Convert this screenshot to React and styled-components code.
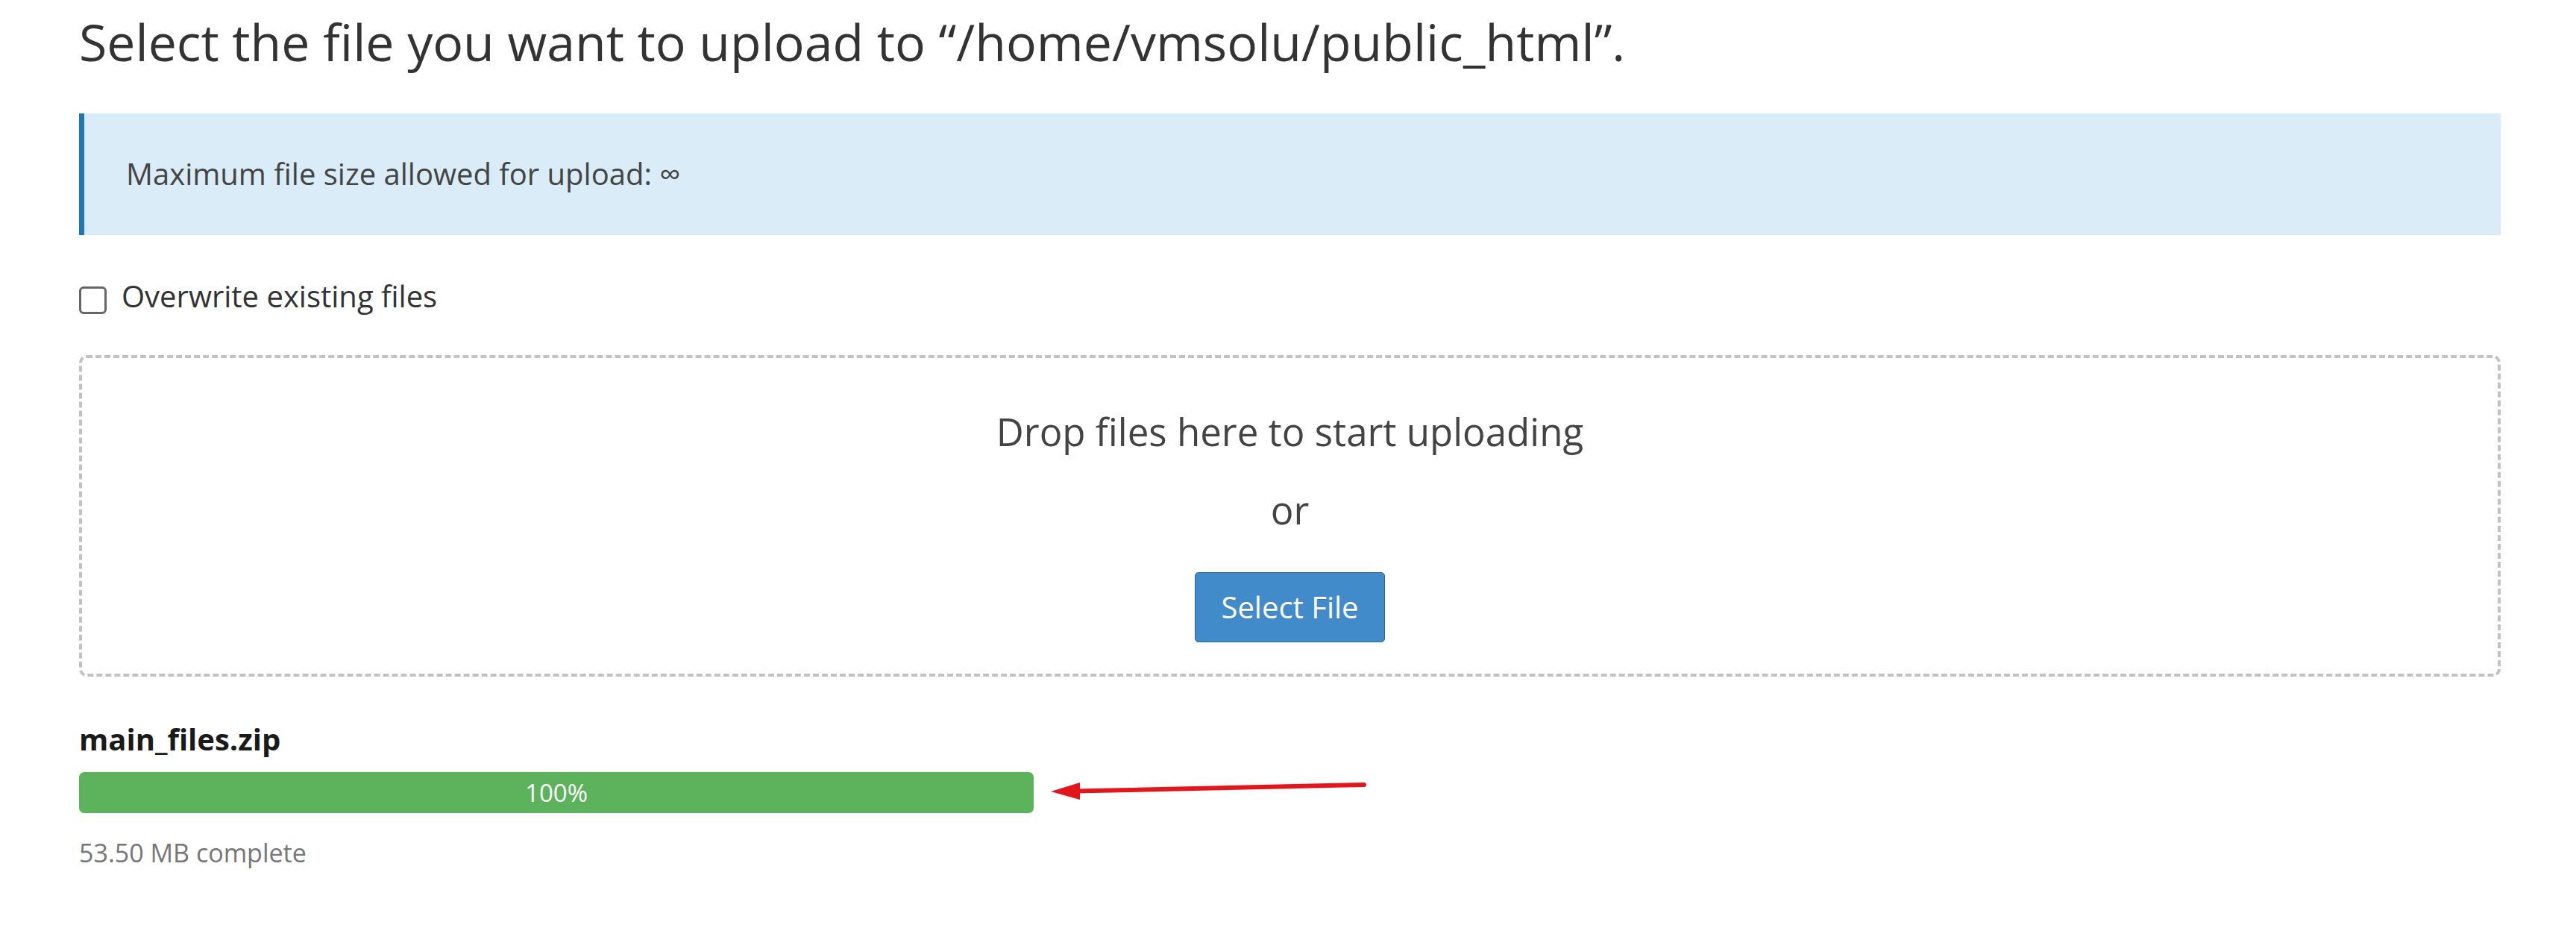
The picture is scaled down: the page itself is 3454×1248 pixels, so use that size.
import React from "react";
import styled, { createGlobalStyle } from "styled-components";

const GlobalStyle = createGlobalStyle`
  html, body { margin: 0; padding: 0; background: #ffffff; }
  body { font-family: "Open Sans", "Liberation Sans", sans-serif; color: #333; }
  * { box-sizing: border-box; }
`;

const Page = styled.main`
  width: 3454px;
  padding: 16px 101px 60px 106px;
`;

const Title = styled.h1`
  margin: 0;
  font-size: 68px;
  font-weight: 400;
  line-height: 80px;
  color: #333;
`;

const Callout = styled.div`
  margin-top: 56px;
  background: #d9ecf7;
  border-left: 7px solid #1f77b4;
  padding: 53px 56px 54px;
  font-size: 40px;
  line-height: 56px;
  color: #444;
`;

const CheckRow = styled.label`
  margin-top: 54px;
  display: flex;
  align-items: center;
  gap: 20px;
  font-size: 40px;
  line-height: 56px;
  color: #333;
`;

const Box = styled.input.attrs({ type: "checkbox" })`
  appearance: none;
  margin: 10px 0 0 0;
  width: 37px;
  height: 37px;
  border: 3px solid #666;
  border-radius: 6px;
  background: #fff;
`;

const DropZone = styled.div`
  margin-top: 51px;
  border: 4px dashed #c2c2c2;
  border-radius: 10px;
  padding: 64px 20px 42px;
  display: flex;
  flex-direction: column;
  align-items: center;
`;

const DropText = styled.div`
  font-size: 51px;
  line-height: 68px;
  color: #444;
  margin-top: ${(p) => p.$gap || 0}px;
`;

const PrimaryButton = styled.button`
  margin-top: 50px;
  font-family: inherit;
  font-size: 40px;
  line-height: 56px;
  padding: 18px 34px;
  color: #fff;
  background: #428bca;
  border: 1px solid #2a669f;
  border-radius: 5px;
  text-shadow: 0 1px 0 rgba(0, 0, 0, 0.15);
`;

const FileName = styled.div`
  margin-top: 56px;
  font-size: 40px;
  line-height: 56px;
  font-weight: 700;
  color: #1a1a1a;
`;

const ProgressRow = styled.div`
  margin-top: 16px;
  display: flex;
  align-items: center;
`;

const Track = styled.div`
  width: 1280px;
  height: 55px;
  border-radius: 7px;
  background: #f5f5f5;
  overflow: hidden;
`;

const Fill = styled.div`
  height: 100%;
  background: #5cb35c;
  color: #fff;
  font-size: 33px;
  line-height: 55px;
  text-align: center;
`;

const Arrow = styled.svg`
  margin-left: 19px;
  flex: none;
`;

const Meta = styled.div`
  margin-top: 29px;
  font-size: 34px;
  line-height: 48px;
  color: #777;
`;

export default function App() {
  const pct = 100;
  return (
    <>
      <GlobalStyle />
      <Page>
        <Title>Select the file you want to upload to “/home/vmsolu/public_html”.</Title>
        <Callout>Maximum file size allowed for upload: ∞</Callout>
        <CheckRow>
          <Box />
          <span>Overwrite existing files</span>
        </CheckRow>
        <DropZone>
          <DropText>Drop files here to start uploading</DropText>
          <DropText $gap={37}>or</DropText>
          <PrimaryButton>Select File</PrimaryButton>
        </DropZone>
        <FileName>main_files.zip</FileName>
        <ProgressRow>
          <Track>
            <Fill style={{ width: `${pct}%` }}>{pct}%</Fill>
          </Track>
          <Arrow width="432" height="40" viewBox="0 0 432 40">
            <line x1="36" y1="17.5" x2="424" y2="9" stroke="#e3161d" strokeWidth="6" strokeLinecap="round" />
            <polygon points="4,18 43,6 43,29" fill="#e3161d" />
          </Arrow>
        </ProgressRow>
        <Meta>53.50 MB complete</Meta>
      </Page>
    </>
  );
}
